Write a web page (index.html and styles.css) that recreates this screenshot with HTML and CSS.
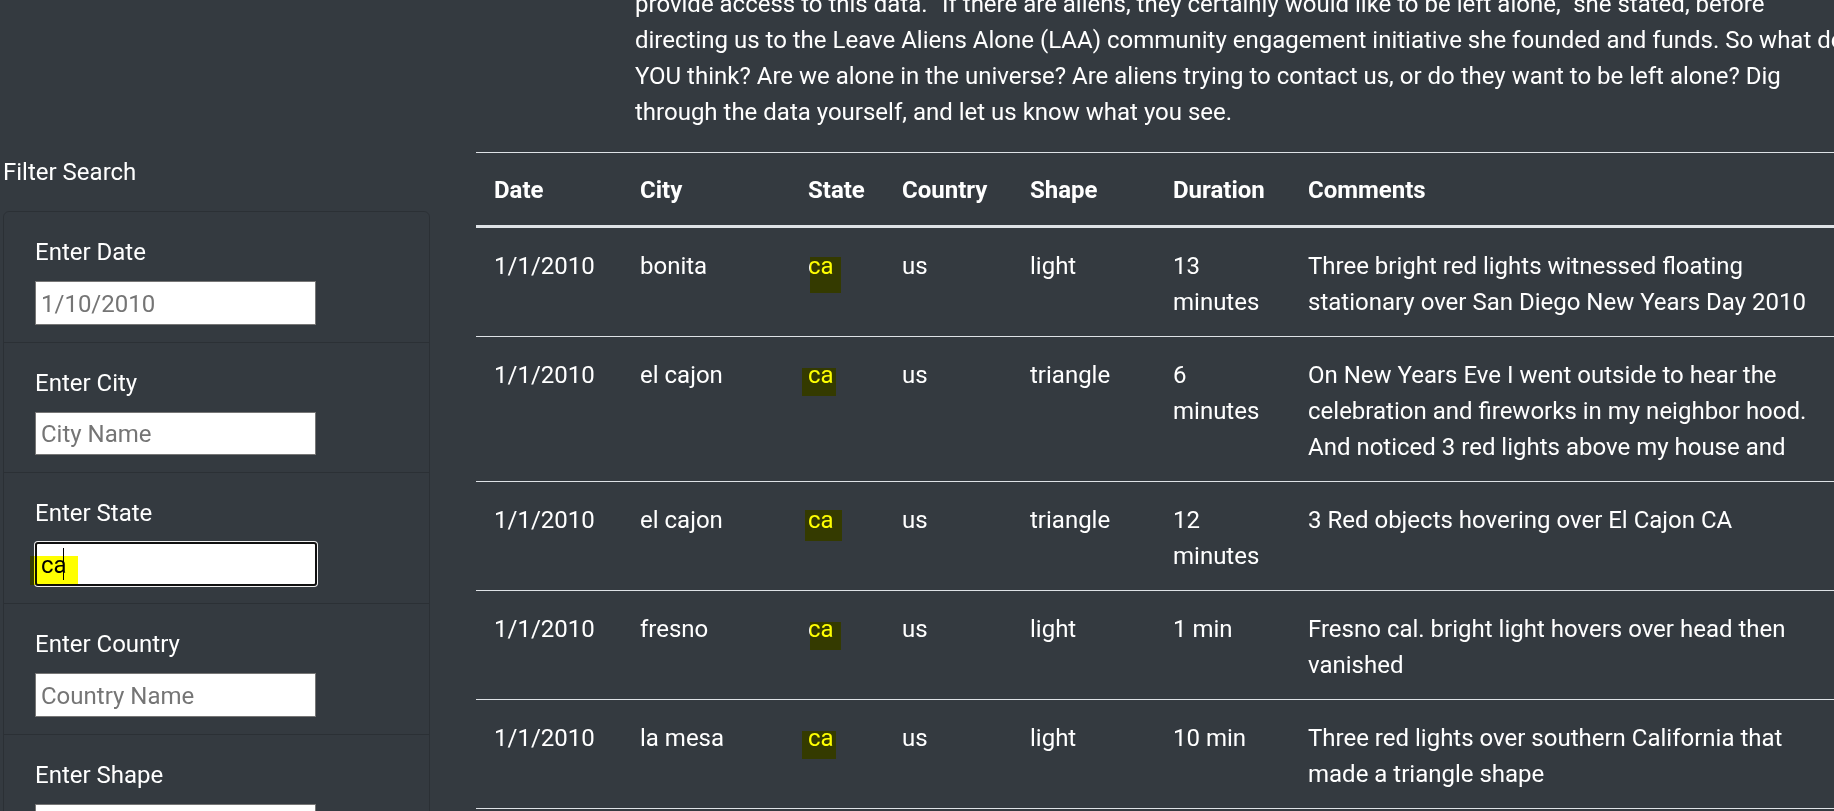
FILE: index.html
```html
<!DOCTYPE html>
<html lang="en">
<head>
<meta charset="utf-8">
<title>UFO Sightings</title>
<link rel="stylesheet" href="styles.css">
</head>
<body>
<div class="page">
  <div class="intro">
    <p>provide access to this data. “If there are aliens, they certainly would like to be left alone,” she stated, before<br>directing us to the Leave Aliens Alone (LAA) community engagement initiative she founded and funds. So what do<br>YOU think? Are we alone in the universe? Are aliens trying to contact us, or do they want to be left alone? Dig<br>through the data yourself, and let us know what you see.</p>
  </div>
  <div class="main">
    <aside class="filters">
      <div class="filters-title">Filter Search</div>
      <ul class="filter-card">
        <li class="filter-item">
          <label class="filter-label" for="datetime">Enter Date</label>
          <input class="filter-input" id="datetime" type="text" placeholder="1/10/2010">
        </li>
        <li class="filter-item">
          <label class="filter-label" for="city">Enter City</label>
          <input class="filter-input" id="city" type="text" placeholder="City Name">
        </li>
        <li class="filter-item">
          <label class="filter-label" for="state">Enter State</label>
          <div class="field">
            <input class="filter-input is-focused" id="state" type="text" value="ca" placeholder="State">
            <span class="field-hl"></span>
            <span class="field-caret"></span>
          </div>
        </li>
        <li class="filter-item">
          <label class="filter-label" for="country">Enter Country</label>
          <input class="filter-input" id="country" type="text" placeholder="Country Name">
        </li>
        <li class="filter-item">
          <label class="filter-label" for="shape">Enter Shape</label>
          <input class="filter-input" id="shape" type="text" placeholder="Shape">
        </li>
      </ul>
    </aside>
    <section class="results">
      <table class="ufo-table">
        <colgroup>
          <col class="c-date"><col class="c-city"><col class="c-state"><col class="c-country"><col class="c-shape"><col class="c-duration"><col class="c-comments">
        </colgroup>
        <thead>
          <tr><th>Date</th><th>City</th><th>State</th><th>Country</th><th>Shape</th><th>Duration</th><th>Comments</th></tr>
        </thead>
        <tbody>
          <tr><td>1/1/2010</td><td>bonita</td><td><span class="hl hl-tall">ca</span></td><td>us</td><td>light</td><td>13 minutes</td><td>Three bright red lights witnessed floating stationary over San Diego New Years Day 2010</td></tr>
          <tr><td>1/1/2010</td><td>el cajon</td><td><span class="hl hl-left">ca</span></td><td>us</td><td>triangle</td><td>6 minutes</td><td>On New Years Eve I went outside to hear the celebration and fireworks in my neighbor hood. And noticed 3 red lights above my house and</td></tr>
          <tr><td>1/1/2010</td><td>el cajon</td><td><span class="hl hl-wide">ca</span></td><td>us</td><td>triangle</td><td>12 minutes</td><td>3 Red objects hovering over El Cajon CA</td></tr>
          <tr><td>1/1/2010</td><td>fresno</td><td><span class="hl">ca</span></td><td>us</td><td>light</td><td>1 min</td><td>Fresno cal. bright light hovers over head then vanished</td></tr>
          <tr><td>1/1/2010</td><td>la mesa</td><td><span class="hl hl-left">ca</span></td><td>us</td><td>light</td><td>10 min</td><td>Three red lights over southern California that made a triangle shape</td></tr>
          <tr><td>1/1/2010</td><td>lakeside</td><td><span class="hl">ca</span></td><td>us</td><td>light</td><td>5 min</td><td>Bright orange light moving slowly to the east</td></tr>
        </tbody>
      </table>
    </section>
  </div>
</div>
</body>
</html>
```

FILE: styles.css
```css
* {
  box-sizing: border-box;
}

html,
body {
  margin: 0;
  padding: 0;
  background: #343a40;
}

body {
  font-family: "Segoe UI", Roboto, "Noto Sans", sans-serif;
  font-size: 24px;
  line-height: 1.5;
  color: #fff;
}

.page {
  width: 1834px;
  height: 811px;
  overflow: hidden;
  background: #343a40;
}

.intro {
  margin: -14px 0 22px 635px;
  white-space: nowrap;
}

.intro p {
  margin: 0;
}

.main {
  display: grid;
  grid-template-columns: 476px 1358px;
  align-items: start;
}

/* Sidebar */
.filters {
  padding-left: 3px;
}

.filters-title {
  font-size: 24px;
  line-height: 39px;
  padding-top: 1px;
  margin: 0 0 19px;
}

.filter-card {
  list-style: none;
  margin: 0;
  padding: 0;
  width: 427px;
  border: 1px solid rgba(0, 0, 0, 0.16);
  border-radius: 6px;
}

.filter-item {
  padding: 21px 30px 17px 31px;
  border-top: 1px solid rgba(0, 0, 0, 0.16);
}

.filter-item:first-child {
  border-top: 0;
}

.filter-label {
  display: block;
  line-height: 36px;
  padding-top: 1px;
  margin-bottom: 11px;
}

.filter-input {
  display: block;
  width: 281px;
  height: 43.5px;
  margin: 0;
  padding: 2px 5px 0;
  border: 1px solid #767676;
  border-radius: 0;
  background: #fff;
  color: #000;
  font-family: inherit;
  font-size: 24px;
  line-height: normal;
  outline: none;
}

.filter-input::placeholder {
  color: #757575;
  opacity: 1;
}

.filter-input.is-focused {
  width: 282px;
  height: 44px;
  border: 2px solid #101010;
  border-radius: 3px;
  padding-left: 4px;
  box-shadow: 0 0 0 1px #f0f0f0;
}

.field {
  position: relative;
  width: 282px;
}

.field-hl {
  position: absolute;
  left: -5px;
  top: 14px;
  width: 48px;
  height: 29px;
  background: #ffff00;
  mix-blend-mode: multiply;
  pointer-events: none;
}

.field-caret {
  position: absolute;
  left: 28px;
  top: 6px;
  width: 1px;
  height: 32px;
  background: #000;
}

/* Table */
.ufo-table {
  width: 1358px;
  border-collapse: collapse;
  table-layout: fixed;
  color: #fff;
}

.c-date { width: 146px; }
.c-city { width: 168px; }
.c-state { width: 94px; }
.c-country { width: 128px; }
.c-shape { width: 143px; }
.c-duration { width: 135px; }
.c-comments { width: 544px; }

.ufo-table th,
.ufo-table td {
  padding: 20px 18px 16px;
  text-align: left;
  vertical-align: top;
  border-top: 1px solid #dee2e6;
}

.ufo-table thead th {
  padding: 19px 18px 17px;
  vertical-align: bottom;
  font-weight: 700;
  border-bottom: 3px solid #dee2e6;
}

.hl {
  position: relative;
}

.hl::after {
  content: "";
  position: absolute;
  left: 2px;
  right: -7px;
  top: 7px;
  bottom: -7px;
  background: #ffff00;
  mix-blend-mode: multiply;
}

.hl-tall::after {
  top: 5px;
  bottom: -13px;
}

.hl-left::after {
  left: -6px;
  right: -2px;
}

.hl-wide::after {
  left: -3px;
  right: -8px;
  top: 4px;
}
```
